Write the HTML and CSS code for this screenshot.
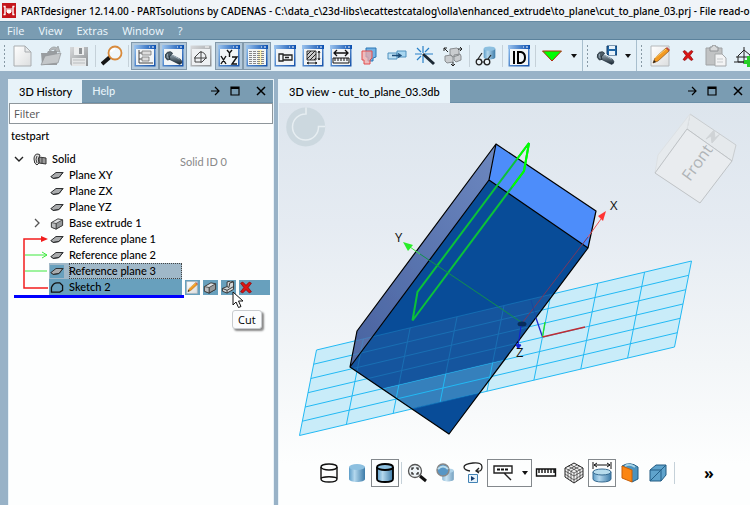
FILE: index.html
```html
<!DOCTYPE html>
<html lang="en">
<head>
<meta charset="utf-8">
<title>PARTdesigner</title>
<link rel="stylesheet" href="styles.css">
</head>
<body>
<svg class="defs" aria-hidden="true">
  <defs>
    <linearGradient id="gBar"><stop offset="0" stop-color="#9cc4ee"/><stop offset="1" stop-color="#0a4fb0"/></linearGradient>
    <linearGradient id="gFrame" x1="0" y1="0" x2="1" y2="1"><stop offset="0" stop-color="#8fc0f0"/><stop offset="1" stop-color="#1450a8"/></linearGradient>
    <linearGradient id="gGrey" x1="0" y1="0" x2="1" y2="1"><stop offset="0" stop-color="#d8dadc"/><stop offset="1" stop-color="#8b8f92"/></linearGradient>
    <linearGradient id="gPage" x1="0" y1="0" x2="1" y2="1"><stop offset="0" stop-color="#fff"/><stop offset="1" stop-color="#dcdedf"/></linearGradient>
    <linearGradient id="gCyl"><stop offset="0" stop-color="#5d9dc8"/><stop offset=".35" stop-color="#b4d8ee"/><stop offset="1" stop-color="#3c7ba8"/></linearGradient>
    <linearGradient id="gBolt" x1="0" y1="0" x2="0" y2="1"><stop offset="0" stop-color="#9aaab5"/><stop offset="1" stop-color="#182530"/></linearGradient>
  </defs>
  <symbol id="win" viewBox="0 0 22 22">
    <rect x=".5" y=".5" width="21" height="21" fill="url(#gFrame)"/>
    <rect x="2" y="4" width="18" height="16" fill="#f2f5f7"/>
    <rect x="0" y="0" width="22" height="4" fill="url(#gBar)"/>
    <path d="M15 2h1M18 2h2" stroke="#fff"/>
  </symbol>
  <symbol id="bolt" viewBox="0 0 22 22">
    <path d="M7 7l12 6q3 3 1 5l-2 1-12-6z" fill="url(#gBolt)" stroke="#1c2c38" stroke-width=".7"/>
    <path d="M4 5q4-2 6 1l-3 3q-2 1 0 4l-3 1q-4-3-2-7z" fill="#4d5d68" stroke="#111d26" stroke-width=".8"/>
    <path d="M4 7q-1 3 1 5M9 8l9 5" stroke="#a9bac6" fill="none"/>
  </symbol>
  <symbol id="cyl" viewBox="0 0 22 22">
    <path d="M3 5v12c0 4 16 4 16 0V5z" fill="url(#gCyl)"/>
    <ellipse cx="11" cy="5" rx="8" ry="3" fill="#8dc0e0"/>
  </symbol>
  <symbol id="plane" viewBox="0 0 14 10">
    <path d="M1 6l5-4 7 0-4 5-6 1z" fill="#a9abad" stroke="#303234"/>
    <path d="M1 6l2 2 6-1 4-5" fill="none" stroke="#303234"/>
  </symbol>
  <symbol id="block" viewBox="0 0 14 14">
    <path d="M1 6l7-4 5 1v6l-7 4-5-2z" fill="#dfe1e3" stroke="#333"/>
    <path d="M6 7l7-4v6l-7 4z" fill="#96999b" stroke="#333" stroke-width=".8"/>
    <path d="M1 6l5 1v6l-5-2z" fill="#bcbec0" stroke="#333" stroke-width=".8"/>
  </symbol>
  <symbol id="pencil" viewBox="0 0 22 22">
    <path d="M2 1h18v20H2z" fill="url(#gPage)" stroke="#b4b8bb"/>
    <path d="M4 18l2-5L17 3l3 3-11 10z" fill="#f39a22" stroke="#8a5010" stroke-width=".7"/>
    <path d="M6 13L17 4" stroke="#ffd070"/><path d="M4 18l1-3 2 2z" fill="#222"/><path d="M17 3l1-1 3 3-1 1z" fill="#c4473e"/>
  </symbol>
  <symbol id="cross" viewBox="0 0 12 12">
    <path d="M1 2l2-1 3 3 3-3 2 1-3 4 3 4-2 1-3-3-3 3-2-1 3-4z" fill="#dc1414" stroke="#8c0808" stroke-width=".7"/>
  </symbol>
  <symbol id="arrow" viewBox="0 0 10 10"><path d="M1 5h8M5 1l4 4-4 4" fill="none" stroke="#000" stroke-width="1.2"/></symbol>
  <symbol id="maxi" viewBox="0 0 10 10"><path d="M1 1h8v8H1z" fill="none" stroke="#000" stroke-width="1.2"/><path d="M1 2h8" stroke="#000" stroke-width="2"/></symbol>
  <symbol id="close" viewBox="0 0 10 10"><path d="M1 1l8 8M9 1L1 9" stroke="#000" stroke-width="1.5"/></symbol>
</svg>

<div class="app">
  <header class="title">
    <svg class="logo" viewBox="0 0 14 15"><path d="M0 0h14v15H0z" fill="#c4161c"/><path d="M3 3v9M11 3v9M1.500 3.500h2M10.500 3.500h2M1.500 11.500h2M10.500 11.500h2" stroke="#fff" stroke-width="1.400"/><path d="M4 6h6M5 7h4v2l-1 1H6L5 9z" stroke="#fff" fill="#fff"/></svg>
    <span>PARTdesigner 12.14.00 - PARTsolutions by CADENAS - C:\data_c\23d-libs\ecattestcatalog\olla\enhanced_extrude\to_plane\cut_to_plane_03.prj - File read-only</span>
  </header>
  <nav class="menu">
    <button>File</button><button>View</button><button>Extras</button><button>Window</button><button>?</button>
  </nav>

  <div class="toolbar">
    <div class="group">
      <i class="grip"></i>
      <button class="tool" aria-label="New"><svg viewBox="0 0 22 22"><path d="M2 1h11l6 6v14H2z" fill="url(#gPage)" stroke="#a9adb0"/><path d="M13 1v6h6z" fill="#e7e9ea" stroke="#a9adb0"/></svg></button>
      <button class="tool" aria-label="Open"><svg viewBox="0 0 22 22"><path d="M1 8h6l1-2h9v14H2z" fill="#999da0"/><path d="M1 20l4-9 16-3-3 10z" fill="#c4c7c9" stroke="#909497" stroke-width=".7"/><path d="M9 5q4-5 8-2l1-2 2 6-6-1 2-1q-3-2-6 1z" fill="#b5b8ba" stroke="#8c9092" stroke-width=".6"/></svg></button>
      <button class="tool" aria-label="Save"><svg viewBox="0 0 22 22"><path d="M2 2h18v19H4l-2-2z" fill="url(#gGrey)"/><path d="M6 2h10v8H6z" fill="#eceeef"/><path d="M11 3h3v6h-3z" fill="#8e9295"/><path d="M4 13h14v8H4z" fill="#e4e6e7"/><path d="M5 15h12M5 18h12" stroke="#b9bcbe"/></svg></button>
      <i class="sep"></i>
      <button class="tool" aria-label="Search"><svg viewBox="0 0 22 22"><path d="M9 12l-8 7" stroke="#151515" stroke-width="4"/><circle cx="14" cy="8" r="6.500" fill="#f0f7fb" stroke="#d88a3c" stroke-width="1.800"/><path d="M10 7q1-3 4-3" stroke="#fff" fill="none" stroke-width="2"/></svg></button>
      <i class="sep"></i>
      <button class="tool on" aria-label="History"><svg viewBox="0 0 22 22"><use href="#win"/><path d="M5 5v13M5 8h4M5 14h4M5 18h14" stroke="#444" fill="none"/><path d="M8 6h9v4H8zM8 12h7v4H8z" fill="#ddd" stroke="#777" stroke-width=".8"/></svg></button>
      <button class="tool on" aria-label="3D view"><svg viewBox="0 0 22 22"><use href="#win"/><use href="#bolt" x="2" y="3" width="19" height="19"/></svg></button>
      <button class="tool" aria-label="Sketch view"><svg viewBox="0 0 22 22"><path d="M.5.5h21v21H.5z" fill="url(#gGrey)"/><path d="M2 4h18v16H2z" fill="#eef1f3"/><path d="M15 2h4" stroke="#fff"/><path d="M5 17v-5l5-5q6 0 6 6l-4 4zM11 6v12M4 13h13" fill="none" stroke="#444"/></svg></button>
      <button class="tool on" aria-label="Variables"><svg viewBox="0 0 22 22"><use href="#win"/><path d="M3 11l5 8M8 11l-5 8M9 5l2.500 3L14 5M11.500 8v4M14 12h5l-5 7h5" fill="none" stroke="#111" stroke-width="1.400"/></svg></button>
      <button class="tool on" aria-label="Table"><svg viewBox="0 0 22 22"><use href="#win"/><path d="M12 5h4v15h-4z" fill="#fff3b5"/><path d="M3 6.500h16M3 8.500h16M3 10.500h16M3 12.500h16M3 14.500h16M3 16.500h16M3 18.500h16" stroke="#888" stroke-dasharray="3 1"/></svg></button>
      <button class="tool" aria-label="Parts"><svg viewBox="0 0 22 22"><use href="#win"/><path d="M5 9h4v7H5zM9 10h9v5H9zM11 12.500h4" fill="none" stroke="#222" stroke-width="1.300"/></svg></button>
      <button class="tool" aria-label="Section"><svg viewBox="0 0 22 22"><use href="#win"/><path d="M5 6h9v9H5z" fill="#ccc" stroke="#333"/><path d="M5 10l4-4M5 14l8-8M8 15l6-6M12 15l2-2M17 6v9M5 18h10M16 8l1-2 1 2M16 13l1 2 1-2M7 17l-2 1 2 1M13 17l2 1-2 1" fill="none" stroke="#222"/></svg></button>
      <button class="tool" aria-label="Measure"><svg viewBox="0 0 22 22"><use href="#win"/><path d="M4 8h14M7 5L4 8l3 3M15 5l3 3-3 3" fill="none" stroke="#111" stroke-width="1.300"/><path d="M3 13h16v5H3zM5 13v3M8 13v3M11 13v3M14 13v3M17 13v3" fill="none" stroke="#111"/></svg></button>
      <button class="tool" aria-label="Compare"><svg viewBox="0 0 22 22"><path d="M8 3h10v9l-3 1v3h-5v-4H8z" fill="#72b3e4" stroke="#2d77b4"/><path d="M4 6h10v7l-2 2v4H6v-4H4z" fill="#f0a9a9" fill-opacity=".75" stroke="#e34c4c"/></svg></button>
      <button class="tool" aria-label="Link"><svg viewBox="0 0 22 22"><path d="M2 8h9v6H2z" fill="#bfe1f5" stroke="#4f91be"/><path d="M11 6h9v6h-9z" fill="#a8d6f0" stroke="#4f91be"/><path d="M6 10.500h8M12 8.500l3 2-3 2" stroke="#1c4c78" stroke-width="1.300" fill="none"/></svg></button>
      <button class="tool" aria-label="Wizard"><svg viewBox="0 0 22 22"><path d="M9 9l11 10" stroke="#1b2834" stroke-width="3"/><path d="M9 1v7M9 11v7M1 9h7M11 9h8M3 3l4 4M15 3l-4 4M3 15l4-4" stroke="#2880c8" stroke-width="1.200"/></svg></button>
      <button class="tool" aria-label="Explode"><svg viewBox="0 0 22 22"><path d="M8 4l7-1 2 2v5l-6 2-3-2zM3 11l6-1 2 2v5l-6 1-2-2zM12 10l6-1 1 2v4l-5 2-2-2z" fill="#c9cccf" stroke="#8a8e91"/><path d="M2 3l4 4M16 4h4M11 17v4M2 3h3M2 3v3M18 2l2 2-2 2M9 19l2 2 2-2" stroke="#222" fill="none"/></svg></button>
      <i class="sep"></i>
      <button class="tool" aria-label="Inspect part"><svg viewBox="0 0 22 22"><use href="#cyl" x="6" y="0" width="17" height="16"/><circle cx="4" cy="17" r="2.800" fill="#eef5f9" stroke="#222" stroke-width="1.300"/><circle cx="12" cy="17" r="2.800" fill="#eef5f9" stroke="#222" stroke-width="1.300"/><path d="M7 17h2M3 14l4-6M13 14l3-4" stroke="#222" stroke-width="1.200"/></svg></button>
      <i class="sep"></i>
      <button class="tool" aria-label="ID"><svg viewBox="0 0 22 22"><use href="#win"/><path d="M6 6v13M10 7v11h3q4-1 4-5.500T13 7z" fill="none" stroke="#000" stroke-width="2"/></svg></button>
      <i class="sep"></i>
      <button class="tool" aria-label="Run"><svg viewBox="0 0 22 22"><path d="M1.500 6h19L11 16z" fill="#0f0" stroke="#b32a10"/></svg></button>
      <button class="caret" aria-label="Run options"></button>
    </div>
    <div class="group">
      <i class="grip"></i>
      <button class="tool" aria-label="Save part"><svg viewBox="0 0 22 22"><use href="#bolt" x="0" y="3" width="21" height="19"/><path d="M12 1h10v9h-9l-1-1z" fill="#2167a5" stroke="#123c68"/><path d="M14 1h6v3h-6zM14 6h6v4h-6z" fill="#e7f2fa"/></svg></button>
      <button class="caret" aria-label="Save options"></button>
    </div>
    <div class="group">
      <i class="grip"></i>
      <button class="tool" aria-label="Edit"><svg viewBox="0 0 22 22"><use href="#pencil"/></svg></button>
      <button class="tool" aria-label="Delete"><svg viewBox="0 0 22 22"><use href="#cross" x="5" y="4" width="12" height="13"/></svg></button>
      <button class="tool" aria-label="Paste"><svg viewBox="0 0 22 22"><path d="M1 3h16v17H1z" fill="#c1c3c4" stroke="#a0a3a5"/><path d="M5 2h2q0-2 2-2t2 2h2v4H5z" fill="#d8dadb" stroke="#909395"/><path d="M10 9h7l4 4v8H10z" fill="#f3f4f5" stroke="#a5a8aa"/><path d="M12 14h6M12 17h6" stroke="#c6c9cb"/></svg></button>
      <button class="tool" aria-label="Add sketch"><svg viewBox="0 0 22 22"><path d="M5 17v-6l6-6 6 5v7zM1 17h20M11 2v17M3 12h16" fill="none" stroke="#222"/><path d="M14 11h4v4h4v4h-4v3h-4v-3h-3v-4h3z" fill="#27cf27"/></svg></button>
    </div>
  </div>

  <main class="work">
    <section class="panel history">
      <div class="tabs">
        <button class="tab active">3D History</button><button class="tab">Help</button>
        <div class="wctl"><button aria-label="Move"><svg><use href="#arrow"/></svg></button><button aria-label="Maximize"><svg><use href="#maxi"/></svg></button><button aria-label="Close"><svg><use href="#close"/></svg></button></div>
      </div>
      <input class="filter" type="text" placeholder="Filter" aria-label="Filter">
      <div class="tree">
        <div class="root">testpart</div>
        <ul>
          <li><svg class="exp" viewBox="0 0 10 10"><path d="M1 3l4 4 4-4" fill="none" stroke="#222" stroke-width="1.400"/></svg><svg class="ico" viewBox="0 0 14 13"><path d="M6 4l7 1v6l-7-1z" fill="#999" stroke="#333"/><path d="M5 1Q1 1 1 6t3 6l2-2q-2-4 1-8z" fill="#ddd" stroke="#333"/><path d="M9 4v7M4 3q-2 3 0 7" stroke="#444" fill="none"/></svg><span>Solid</span><span class="sid">Solid ID 0</span></li>
          <li class="sub"><svg class="ico"><use href="#plane"/></svg><span>Plane XY</span></li>
          <li class="sub"><svg class="ico"><use href="#plane"/></svg><span>Plane ZX</span></li>
          <li class="sub"><svg class="ico"><use href="#plane"/></svg><span>Plane YZ</span></li>
          <li class="sub parent"><svg class="exp" viewBox="0 0 10 10"><path d="M3 1l4 4-4 4" fill="none" stroke="#555" stroke-width="1.300"/></svg><svg class="ico"><use href="#block"/></svg><span>Base extrude 1</span></li>
          <li class="sub"><svg class="ico"><use href="#plane"/></svg><span>Reference plane 1</span></li>
          <li class="sub"><svg class="ico"><use href="#plane"/></svg><span>Reference plane 2</span></li>
          <li class="sub"><div class="pick near"><svg class="ico"><use href="#plane"/></svg><span>Reference plane 3</span></div></li>
          <li class="sub"><div class="pick"><svg class="ico" viewBox="0 0 14 14"><path d="M1 12V7q2-5 6-5h3l3 3v5l-3 2z" fill="none" stroke="#111" stroke-width="1.400"/></svg><span>Sketch 2</span></div>
            <div class="acts">
              <button aria-label="Edit sketch"><svg><use href="#pencil"/></svg></button>
              <button aria-label="Extrude"><svg><use href="#block"/></svg></button>
              <button aria-label="Cut"><svg viewBox="0 0 14 14"><path d="M6 1l4-1 3 1v8l-7 4-5-2V8l5-2z" fill="#d2d4d5" stroke="#333"/><path d="M6 6l2 1 1-5 4-1M1 8l5 2 7-4M6 10v3" stroke="#333" fill="none"/></svg></button>
              <button class="last" aria-label="Delete sketch"><svg><use href="#cross"/></svg></button>
            </div></li>
        </ul>
        <div class="marker"></div>
        <svg class="links" viewBox="0 0 28 60"><path d="M26 54H2V5h20" fill="none" stroke="#f21d1d" stroke-width="1.500"/><path d="M19 2l7 3-7 3z" fill="#f21d1d"/><path d="M3 21h22M3 37h22M20 18l5 3-5 3" fill="none" stroke="#3fe83f"/></svg>
        <svg class="pointer" viewBox="0 0 12 18"><path d="M1 1v13l3-3 2.500 5.500 2.500-1L6.500 10H11z" fill="#fff" stroke="#111"/></svg>
        <div class="tip">Cut</div>
      </div>
    </section>

    <section class="panel view">
      <div class="tabs">
        <button class="tab active">3D view - cut_to_plane_03.3db</button>
        <div class="wctl"><button aria-label="Move"><svg><use href="#arrow"/></svg></button><button aria-label="Maximize"><svg><use href="#maxi"/></svg></button><button aria-label="Close"><svg><use href="#close"/></svg></button></div>
      </div>
      <div class="stage">
        <svg class="scene" viewBox="279 103 471 350" preserveAspectRatio="xMidYMin meet" role="img" aria-label="3D model">
          <defs>
            <linearGradient id="side" x1="1" y1="0" x2="0" y2="1"><stop offset="0" stop-color="#6c87bf"/><stop offset="1" stop-color="#4963a0"/></linearGradient>
            <clipPath id="body"><path d="M496 144L596 211 588 248 449 434 350 367 357 331z"/></clipPath>
            <clipPath id="band"><path d="M383 388.500L504 360 480 392.500 411 408.500z"/></clipPath>
            <g id="lines" fill="none" stroke="#22b9f4">
              <path d="M316.500 350L691.500 261 674.500 347 299.500 435.500z"/>
              <path d="M313.700 364.200L688.700 275.300M310.800 378.500L685.800 289.700M308 392.700L683 304M305.200 407L680.200 318.300M302.300 421.200L677.300 332.700"/>
              <path d="M363.400 338.900L346.400 424.400M410.200 327.800L393.200 413.400M457.100 316.600L440.100 402.300M504 305.500L487 391.200M550.900 294.400L533.900 380.200M597.800 283.300L580.800 369.100M644.600 272.100L627.600 358.100"/>
            </g>
          </defs>
          <circle cx="305.700" cy="127" r="19.500" fill="#ccd8df"/>
          <path d="M306 107.500v6.500a13 13 0 1 0 12.500 12.500h6.500" fill="none" stroke="#e7eef2" stroke-width="1.500"/>
          <g stroke="#c9cdd0" stroke-linejoin="round">
            <path d="M690 114L736 145 732 161 687 129z" fill="#e5e9ec"/>
            <path d="M690 114L658 155 655 173 687 129z" fill="#e6eaed" stroke="#dde1e4"/>
            <path d="M687 129L732 161 700 203 655 173z" fill="#e9ecef" stroke="#bfc3c6"/>
            <path d="M706 139l8-9 1 8 5-4-8 9-1-7z" fill="#cfd3d6" stroke="#d0d4d7"/>
          </g>
          <text class="face" transform="translate(690 182) rotate(-54)">Front</text>
          <path d="M316.500 350L691.500 261 674.500 347 299.500 435.500z" fill="#c9ecf9"/>
          <use href="#lines"/>
          <path d="M496 144L489 180 350 367 357 331z" fill="url(#side)"/>
          <path d="M496 144L596 211 588 248 489 180z" fill="#4d8dfa"/>
          <path d="M489 180L588 248 449 434 350 367z" fill="#084c98"/>
          <g clip-path="url(#body)">
            <path d="M316.500 350L691.500 261 674.500 347 299.500 435.500z" fill="#fff" opacity=".06"/>
            <use href="#lines" opacity=".25"/>
            <g clip-path="url(#band)"><path d="M380 350h130v60H380z" fill="#3580bc"/><use href="#lines"/></g>
          </g>
          <g fill="none" stroke="#000" stroke-width="1.200" stroke-linejoin="round"><path d="M496 144L596 211 588 248 449 434 350 367 357 331zM496 144L489 180 350 367M489 180L588 248"/></g>
          <path d="M529 143L524 171 412.500 320.500 417.500 292z" fill="none" stroke="#0bc239" stroke-width="2"/>
          <path d="M517 159L529 143 524 171 512 187" fill="none" stroke="#0f0" stroke-width="2"/>
          <path d="M521 322L420 254" stroke="#12914d" fill="none"/><path d="M420 254L410 247" stroke="#3be83b"/>
          <path d="M403 242l10 3-5 6z" fill="#27ee27"/>
          <path d="M523 322L588 237" stroke="#78385e"/><path d="M588 237L601 219" stroke="#ee5252"/>
          <path d="M606 211l-3 10-5-5z" fill="#f33"/>
          <ellipse cx="522" cy="324" rx="4.500" ry="2.500" fill="#082c5c"/>
          <path d="M521 326l-3 20M516 344l2 5 3-4z" stroke="#1222d8" fill="#1222d8"/>
          <path d="M542.500 337L536 318" stroke="#1e25ce" stroke-width="1.300"/><path d="M536 318l-5-18" stroke="#1743a2" opacity=".7"/>
          <path d="M542.500 337l2.500-15" stroke="#22e222" stroke-width="1.300"/><path d="M542.500 337L585 327" stroke="#c22b32" stroke-width="1.300"/>
          <g class="axis"><text x="395" y="242">Y</text><text x="610" y="210">X</text><text x="516" y="357">Z</text></g>
        </svg>
        <div class="viewbar">
          <button class="tool" aria-label="Wireframe"><svg viewBox="0 0 22 22"><path d="M3 5v12c0 4 16 4 16 0V5M3 17c0-3 16-3 16 0" fill="none" stroke="#111" stroke-width="1.400"/><ellipse cx="11" cy="5" rx="8" ry="3" fill="none" stroke="#111" stroke-width="1.400"/></svg></button>
          <button class="tool" aria-label="Shaded"><svg viewBox="0 0 22 22"><use href="#cyl"/></svg></button>
          <button class="tool boxed" aria-label="Shaded with edges"><svg viewBox="0 0 22 22"><use href="#cyl"/><path d="M3 5v12c0 4 16 4 16 0V5" fill="none" stroke="#000" stroke-width="1.800"/><ellipse cx="11" cy="5" rx="8" ry="3" fill="none" stroke="#000" stroke-width="1.800"/></svg></button>
          <i class="sep"></i>
          <button class="tool" aria-label="Zoom to fit"><svg viewBox="0 0 22 22"><circle cx="9" cy="9" r="6.500" fill="#edf3f6" stroke="#555" stroke-width="1.300"/><path d="M14 14l6 5" stroke="#111" stroke-width="3"/><path d="M6 8V6h2M10 6h2v2M12 10v2h-2M8 12H6v-2" fill="none" stroke="#111" stroke-width="1.200"/></svg></button>
          <button class="tool" aria-label="Transparency"><svg viewBox="0 0 22 22"><use href="#cyl" x="6" y="5" width="16" height="16" opacity=".7"/><circle cx="9" cy="8" r="6" fill="#5796c5" stroke="#888" stroke-width="1.500"/><path d="M4 7q5-5 10 0" stroke="#b9dced" fill="none" stroke-width="2"/></svg></button>
          <button class="tool" aria-label="Rotate"><svg viewBox="0 0 22 22"><path d="M8 9Q2 8 2 5t9-4 9 4-5 4M17 6l-3 3 3 2" fill="none" stroke="#222" stroke-width="1.300"/><path d="M6.500 12.500h9v8h-9z" fill="#e8f3fb" stroke="#4283b5"/><path d="M9 14l4 2.500L9 19z" fill="#123c70"/></svg></button>
          <button class="tool boxed split" aria-label="Labels"><svg viewBox="0 0 22 22"><path d="M2 4h18v7H2zM12 11l7 7" fill="none" stroke="#222" stroke-width="1.400"/><path d="M5 7.500h12" stroke="#111" stroke-width="2" stroke-dasharray="3 1"/></svg><span class="tri"></span></button>
          <button class="tool" aria-label="Ruler"><svg viewBox="0 0 22 22"><path d="M1.500 7h19v7h-19zM4 7v4M7 7v4M10 7v4M13 7v4M16 7v4M19 7v4" fill="none" stroke="#111" stroke-width="1.400"/></svg></button>
          <button class="tool" aria-label="Mesh"><svg viewBox="0 0 22 22"><path d="M11 1l9 5v9l-9 6-9-6V6z" fill="#f3f3f3" stroke="#222"/><path d="M2 6l9 5 9-5M11 11v10M5 4l9 5v10M8 3l9 5v9M14 3L5 8v9M17 4L8 9v10M2 9l9 5 9-5M2 12l9 6 9-6" fill="none" stroke="#333" stroke-width=".7"/></svg></button>
          <button class="tool boxed" aria-label="Dimensions"><svg viewBox="0 0 22 22"><path d="M2 10v7c0 4 18 4 18 0v-7z" fill="url(#gCyl)" stroke="#376b91"/><ellipse cx="11" cy="10" rx="9" ry="3" fill="#b7dced" stroke="#376b91"/><path d="M2 0v7M20 0v7M3 3h16M6 1L3 3l3 2M16 1l3 2-3 2" stroke="#111" fill="none"/></svg></button>
          <button class="tool" aria-label="Section view"><svg viewBox="0 0 22 22"><path d="M3 4q8-5 16 1v12l-6 3z" fill="#4c92bd" stroke="#205b82"/><path d="M3 4l10 4v12L3 16z" fill="#fb8512" stroke="#c85f08"/><path d="M6 4q5-3 10 1" stroke="#a7d3e7" stroke-width="2" fill="none"/></svg></button>
          <button class="tool" aria-label="Perspective"><svg viewBox="0 0 22 22"><path d="M3 8l6-5h10v10l-5 6H3z" fill="#5fa3cc" stroke="#205b82"/><path d="M3 8h11v11M14 8l5-5M3 19L14 8" fill="none" stroke="#245f87"/></svg></button>
          <i class="sep"></i>
          <button class="more" aria-label="More">»</button>
        </div>
      </div>
    </section>
  </main>
</div>
</body>
</html>
```
FILE: styles.css
```css
* { box-sizing: border-box; }
body {
  margin: 0;
  font: 500 11px/16px "Open Sans", "Noto Sans", sans-serif;
  color: #000;
  background: #98b2c7;
}
button { font: inherit; color: inherit; border: 0; padding: 0; background: none; }
.defs { position: absolute; width: 0; height: 0; }
.app { display: flex; flex-direction: column; height: 100vh; overflow: hidden; }

.title {
  display: flex; flex: none; align-items: center; gap: 5px;
  height: 21px; padding-left: 2px;
  font-family: "Noto Sans", sans-serif; font-size: 10px;
  background: #f0f4f8; white-space: nowrap; overflow: hidden;
}
.logo { width: 14px; height: 15px; flex: none; }
.menu {
  display: flex; flex: none; gap: 14px;
  height: 19px; padding: 0 7px;
  background: #7a9cb2; color: #edf7fd;
  border-top: 1px solid #668ba4; border-bottom: 1px solid #5b829c;
}

.toolbar { display: flex; flex: none; height: 31px; overflow: hidden; background: #e5f1f8; }
.group { display: flex; flex: none; align-items: center; border-right: 1px solid #a8bfce; }
.grip { width: 9px; height: 24px; background: radial-gradient(circle, #8799a5 1px, transparent 1px) 2px 0 / 5px 4px repeat-y; }
.sep { width: 5px; height: 22px; background: linear-gradient(#c5d1d9, #c5d1d9) 2px 0 / 1px 100% no-repeat; }
.tool { display: flex; flex: none; align-items: center; justify-content: center; width: 28px; height: 28px; }
.tool svg { width: 22px; height: 22px; flex: none; }
.tool.on { background: #b3c9db; border: 1px solid #8299ab; }
.caret { width: 16px; height: 28px; display: flex; align-items: center; justify-content: center; }
.caret::before, .tri { content: ""; border: 3px solid transparent; border-top: 4px solid #111; border-bottom: 0; }

.work { display: flex; flex: 1; min-height: 0; gap: 4px; padding: 8px 0 0 8px; }
.panel { display: flex; flex-direction: column; min-width: 0; background: #fdfefe; border: 1px solid #e8f2f8; border-bottom: 0; }
.history { flex: 0 0 266px; }
.view { flex: 1; border-right: 0; }
.tabs { display: flex; flex: none; height: 23px; font-family: Lato, sans-serif; background: #7a9cb2; border-bottom: 1px solid #6b90a9; }
.tab { padding: 0 10px; color: #e6f3fa; white-space: nowrap; }
.tab.active { background: #e8f3f9; color: #000; height: 23px; }
.wctl { display: flex; gap: 10px; margin-left: auto; padding-right: 7px; align-items: center; }
.wctl button { display: flex; }
.wctl button:last-child { margin-left: 6px; }
.wctl svg { width: 10px; height: 10px; }

.filter {
  flex: none; height: 21px; padding: 0 4px;
  font: inherit; font-weight: 400; border: 1px solid #8e969b; border-radius: 0; background: #fff;
}
.filter::placeholder { color: #555; opacity: 1; }
.tree { position: relative; padding-top: 4px; font-family: Lato, sans-serif; }
.root { padding-left: 2px; height: 23px; }
.tree ul { list-style: none; margin: 0; padding: 0 0 0 5px; }
.tree li { display: flex; align-items: center; height: 16px; white-space: nowrap; }
.exp { width: 10px; height: 10px; margin-right: 9px; }
.ico { width: 14px; height: 13px; margin-right: 5px; flex: none; }
.sid { margin-left: auto; padding-right: 46px; padding-top: 6px; color: #888; font-weight: 400; }
.tree .sub { padding-left: 36px; }
.tree .parent { padding-left: 18px; }
.parent .exp { margin-right: 8px; }
.pick { display: flex; align-items: center; width: 133px; height: 16px; margin-left: -1px; padding-left: 1px; background: #68a0bd; }
.near { background: #a0b8c8; }
.near .ico { background: #68a0bd; }
.near span { flex: 1; outline: 1px dotted #444; outline-offset: -1px; }
.acts { display: flex; gap: 3px; margin-left: 3px; }
.acts button { display: flex; align-items: center; width: 15px; height: 15px; background: #68a0bd; }
.acts svg { width: 14px; height: 13px; }
.acts .last { width: 31px; }
.marker { height: 3px; width: 170px; margin-left: 5px; background: #00f; }
.links { position: absolute; left: 13px; top: 110px; width: 28px; height: 60px; }
.pointer { position: absolute; left: 223px; top: 167px; width: 12px; height: 18px; }
.tip {
  position: absolute; left: 223px; top: 186px;
  padding: 0 5px; border: 1px solid #c9cccf; border-radius: 3px;
  background: #fbfcfd; box-shadow: 2px 2px 2px #8a8a8a; font: 11px/17px "Open Sans", sans-serif;
}

.stage { display: flex; flex: 1; flex-direction: column; min-height: 0; background: linear-gradient(#dde5ed, #e5ebf2 30%, #f3f6f8 65%, #fdfefe 90%); }
.scene { display: block; flex: 1; width: 100%; min-height: 0; }
.face { font: 16px "Open Sans", sans-serif; fill: #afb3b6; }
.axis { font: 13px "Open Sans", sans-serif; fill: #111; }
.viewbar { display: flex; flex: none; align-items: center; padding: 0 0 18px 36px; }
.viewbar .sep { width: 4px; }
.viewbar .boxed { border: 1px solid #83888c; }
.split { width: 45px; gap: 8px; }
.more { margin-left: 28px; font-size: 16px; font-weight: 700; }
```
